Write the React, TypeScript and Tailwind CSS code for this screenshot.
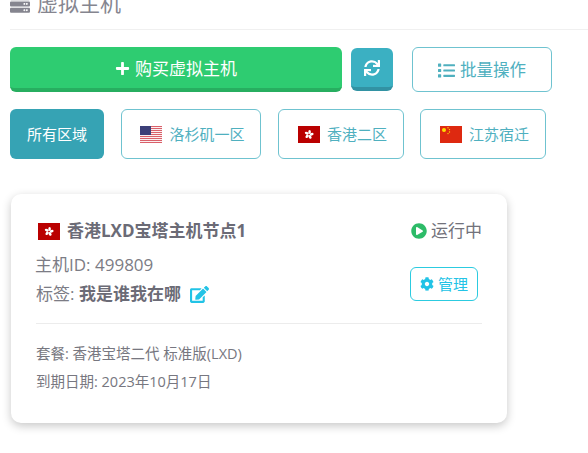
import { FaServer, FaPlus, FaSync, FaList, FaPlayCircle, FaCog, FaEdit } from 'react-icons/fa';

const UsFlag = () => (
    <svg width="22" height="17" viewBox="0 0 22 17" className="shrink-0">
        <rect width="22" height="17" fill="#fff" />
        {[0, 2, 4, 6, 8, 10, 12, 14, 16].map(y => (
            <rect key={y} y={y * 1.0} width="22" height="1.1" fill="#d9606a" />
        ))}
        <rect width="11" height="9" fill="#3c3f78" />
    </svg>
);

const HkFlag = () => (
    <svg width="22" height="17" viewBox="0 0 22 17" className="shrink-0">
        <rect width="22" height="17" fill="#ba0000" />
        <g fill="#fff">
            {[0, 72, 144, 216, 288].map(r => (
                <ellipse key={r} cx="11.6" cy="6" rx="1.3" ry="2.1" transform={`rotate(${r} 11 8.5)`} />
            ))}
        </g>
        <circle cx="11" cy="8.5" r="0.6" fill="#ba0000" />
    </svg>
);

const CnFlag = () => (
    <svg width="22" height="17" viewBox="0 0 22 17" className="shrink-0">
        <rect width="22" height="17" fill="#de2910" />
        <g fill="#ffde00">
            <circle cx="4" cy="4" r="2" />
            <circle cx="8" cy="1.8" r="0.7" />
            <circle cx="9.5" cy="3.6" r="0.7" />
            <circle cx="9.5" cy="6" r="0.7" />
            <circle cx="8" cy="7.6" r="0.7" />
        </g>
    </svg>
);

const REGIONS = [
    { name: '洛杉矶一区', flag: <UsFlag />, box: 'w-[140px] mr-px' },
    { name: '香港二区', flag: <HkFlag />, box: 'w-[126px]' },
    { name: '江苏宿迁', flag: <CnFlag />, box: 'w-[126px]' },
];

export default function App() {
    return (
        <div className="w-[588px] h-[453px] overflow-hidden bg-white text-[#6b6b76] font-['Open_Sans','Noto_Sans_CJK_SC',sans-serif]">
            {/* page heading, cut off by the top of the window */}
            <div className="h-[30px] border-b border-[#f0f0f0] ml-[10px]">
                <div className="flex items-center gap-[7px] h-[7px] text-[21px] text-[#85858f]">
                    <FaServer size={20} />
                    <span>虚拟主机</span>
                </div>
            </div>

            <div className="flex items-start pl-[10px] mt-[17px]">
                <button className="w-[332px] h-[45px] pt-[2px] rounded-[6px] bg-[#2ecc71] border-b-[4px] border-[#27ae60] text-white text-[17px] flex items-center justify-center gap-[5px]">
                    <FaPlus size={15} />
                    <span>购买虚拟主机</span>
                </button>
                <button className="w-[42px] h-[43px] ml-[9px] mt-px rounded-[6px] bg-[#3bb0c2] border-b-[4px] border-[#3292a3] text-white flex items-center justify-center">
                    <FaSync size={16} />
                </button>
                <button className="w-[140px] h-[45px] pt-px ml-[19px] rounded-[6px] border border-[#6fc3d0] text-[#4fb0bf] text-[16.5px] flex items-center justify-center gap-[5px]">
                    <FaList size={17} />
                    <span>批量操作</span>
                </button>
            </div>

            <div className="flex pl-[10px] mt-[17px] gap-[16px]">
                <button className="w-[94px] h-[50px] mr-px rounded-[6px] bg-[#36a3b4] text-white text-[15px]">所有区域</button>
                {REGIONS.map(r => (
                    <button
                        key={r.name}
                        className={`${r.box} h-[50px] pl-[3px] gap-[7px] rounded-[6px] border border-[#6fc3d0] text-[#4fb0bf] text-[15px] flex items-center justify-center`}
                    >
                        {r.flag}
                        <span>{r.name}</span>
                    </button>
                ))}
            </div>

            <div className="w-[496px] h-[229px] ml-[11px] mt-[35px] rounded-[10px] bg-white shadow-[0_3px_10px_rgba(0,0,0,0.22)] px-[25px] pt-[26px]">
                <div className="flex justify-between h-[104px] border-b border-[#ececec]">
                    <div>
                        <div className="flex items-center gap-[7px] h-[22px] ml-[2px]">
                            <HkFlag />
                            <span className="text-[17px] font-bold">香港LXD宝塔主机节点1</span>
                        </div>
                        <div className="mt-[11px] -ml-px text-[17px] leading-[24px] text-[#7c7c85]">主机ID: 499809</div>
                        <div className="mt-[5px] text-[17px] leading-[24px] text-[#7c7c85] flex items-center">
                            <span>标签:&nbsp;</span>
                            <b className="text-[#6b6b76]">我是谁我在哪</b>
                            <FaEdit size={19} className="ml-[9px] text-[#22c3e6]" />
                        </div>
                    </div>
                    <div className="flex flex-col items-end">
                        <div className="flex items-center gap-[4px] text-[17px] leading-[22px] text-[#72727b]">
                            <FaPlayCircle size={16} className="text-[#2dbb68]" />
                            <span>运行中</span>
                        </div>
                        <button className="mt-[25px] mr-[4px] w-[68px] h-[34px] rounded-[6px] border border-[#2ccbe0] text-[#22c3e6] text-[15px] flex items-center justify-center gap-[4px]">
                            <FaCog size={14} />
                            <span>管理</span>
                        </button>
                    </div>
                </div>
                <div className="mt-[20px] text-[14.5px] leading-[20px] text-[#777780]">套餐: 香港宝塔二代 标准版(LXD)</div>
                <div className="mt-[8px] text-[14.5px] leading-[20px] text-[#777780]">到期日期: 2023年10月17日</div>
            </div>
        </div>
    );
}
